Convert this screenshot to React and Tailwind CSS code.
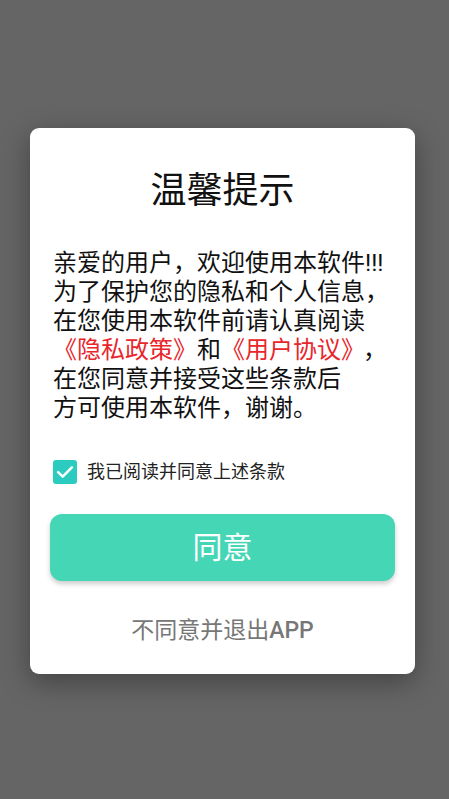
import React, { useState } from 'react';

const font = { fontFamily: 'Roboto, "Noto Sans CJK SC", sans-serif' };

const App = () => {
  const [checked, setChecked] = useState(true);

  return (
    <div
      className="min-h-screen w-full bg-[#656565] flex items-center pl-[30px]"
      style={font}
    >
      {/* Dialog card */}
      <div className="w-[385px] h-[546px] mt-[2px] bg-white rounded-[9px] shadow-[0_8px_28px_rgba(0,0,0,0.35)] px-[20px] pt-[43px]">
        {/* Title */}
        <h2 className="text-[36px] leading-[40px] text-center text-[#111]">
          温馨提示
        </h2>

        {/* Message */}
        <div className="mt-[38px] pl-[3px] text-[24px] leading-[29px] text-[#111] whitespace-nowrap">
          <p>亲爱的用户，欢迎使用本软件!!!</p>
          <p>为了保护您的隐私和个人信息，</p>
          <p>在您使用本软件前请认真阅读</p>
          <p>
            <span className="text-[#e8262b]">《隐私政策》</span>和
            <span className="text-[#e8262b]">《用户协议》</span>
            <span className="ml-[10px]">，</span>
          </p>
          <p>在您同意并接受这些条款后</p>
          <p>方可使用本软件，谢谢。</p>
        </div>

        {/* Checkbox */}
        <label className="mt-[37px] ml-[3px] flex items-center gap-[10px] h-[24px] cursor-pointer">
          <span
            onClick={() => setChecked(!checked)}
            className={
              checked
                ? 'w-[24px] h-[24px] rounded-[3px] bg-[#2ccbbf] flex items-center justify-center'
                : 'w-[24px] h-[24px] rounded-[3px] border-2 border-[#999] bg-white'
            }
          >
            {checked ? (
              <svg viewBox="0 0 24 24" className="w-[22px] h-[22px]" fill="none">
                <path
                  d="M4.5 12.2l5 4.8L19.5 7"
                  stroke="white"
                  strokeWidth="2.8"
                  strokeLinecap="round"
                  strokeLinejoin="round"
                />
              </svg>
            ) : null}
          </span>
          <span className="text-[18px] text-[#222]">我已阅读并同意上述条款</span>
        </label>

        {/* Agree button */}
        <button
          type="button"
          className="mt-[30px] w-full h-[67px] rounded-[12px] bg-[#45d6b5] text-white text-[30px] shadow-[0_3px_5px_rgba(0,0,0,0.2)] flex items-center justify-center"
        >
          同意
        </button>

        {/* Exit */}
        <div className="mt-[35px] text-center text-[23px] leading-[30px] text-[#777]">
          不同意并退出<span className="font-medium">APP</span>
        </div>
      </div>
    </div>
  );
};

export default App;
